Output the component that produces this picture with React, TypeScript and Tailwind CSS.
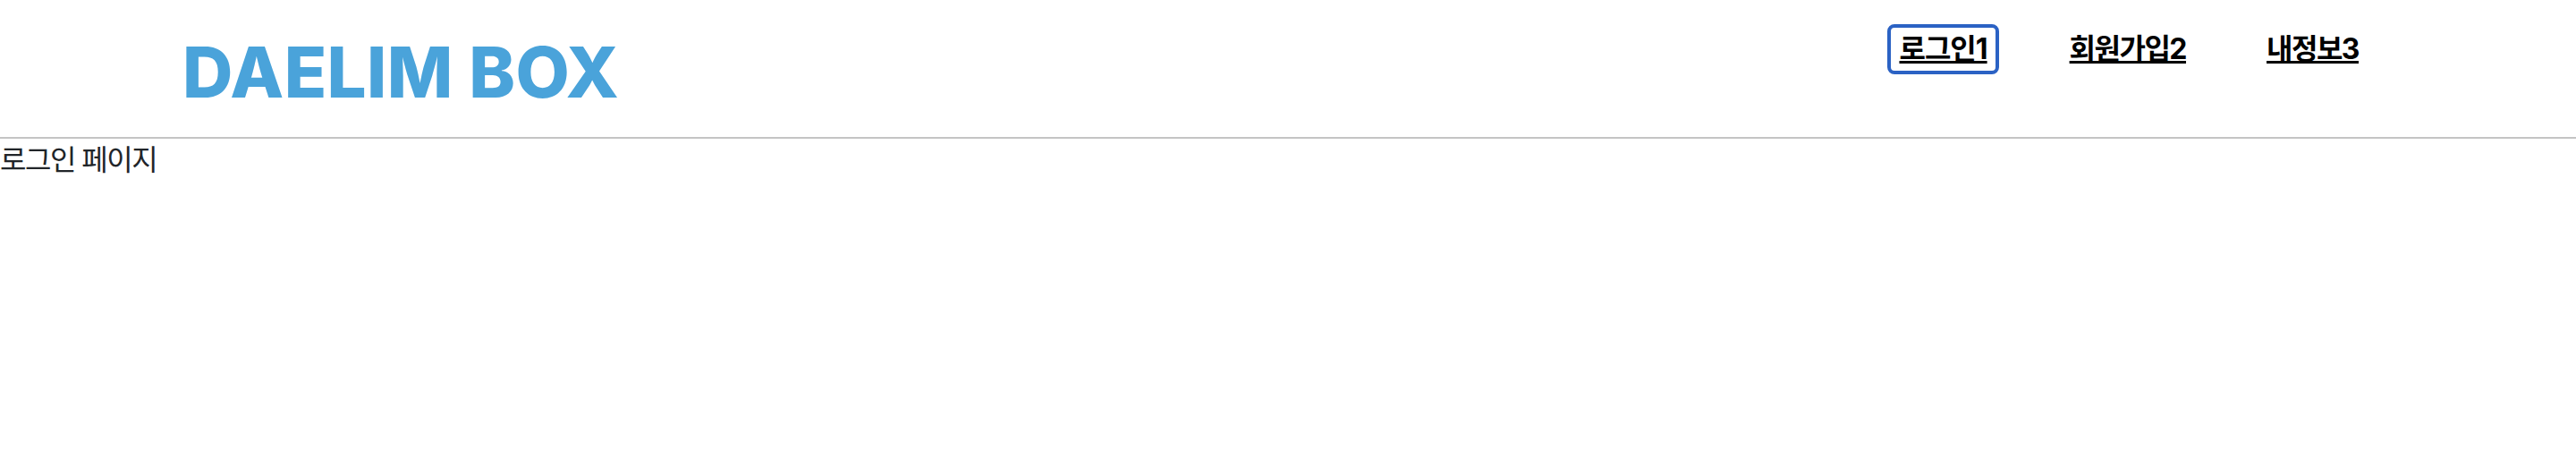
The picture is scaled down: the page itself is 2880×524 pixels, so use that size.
const App = () => {
  return (
    <div className="min-h-[524px] bg-white text-[#212529] font-['Inter','Noto_Sans_CJK_KR',sans-serif]">
      <header className="flex h-[155px] justify-between border-b-2 border-[#c4c4c4]">
        <h1 className="ml-[204px] mt-[34px] text-[78px] leading-[94px] font-[850] tracking-[0.4px] text-[#4aa3da]">DAELIM BOX</h1>
        <nav className="mr-[230px] mt-[27px] flex items-start gap-[64px] text-[32px] font-bold tracking-[-1.5px] text-black">
          <a href="#" className="mr-[2px] rounded-lg border-4 border-[#2b62c4] px-[9px] leading-[48px] tracking-[-1px] underline decoration-[3px]">로그인1</a>
          <a href="#" className="border-4 border-transparent px-[9px] leading-[48px] underline decoration-[3px]">회원가입2</a>
          <a href="#" className="border-4 border-transparent px-[9px] leading-[48px] underline decoration-[3px]">내정보3</a>
        </nav>
      </header>
      <p className="mt-[5px] text-[32px] leading-[38px] tracking-[-1.5px]">로그인 페이지</p>
    </div>
  );
};

export default App;
